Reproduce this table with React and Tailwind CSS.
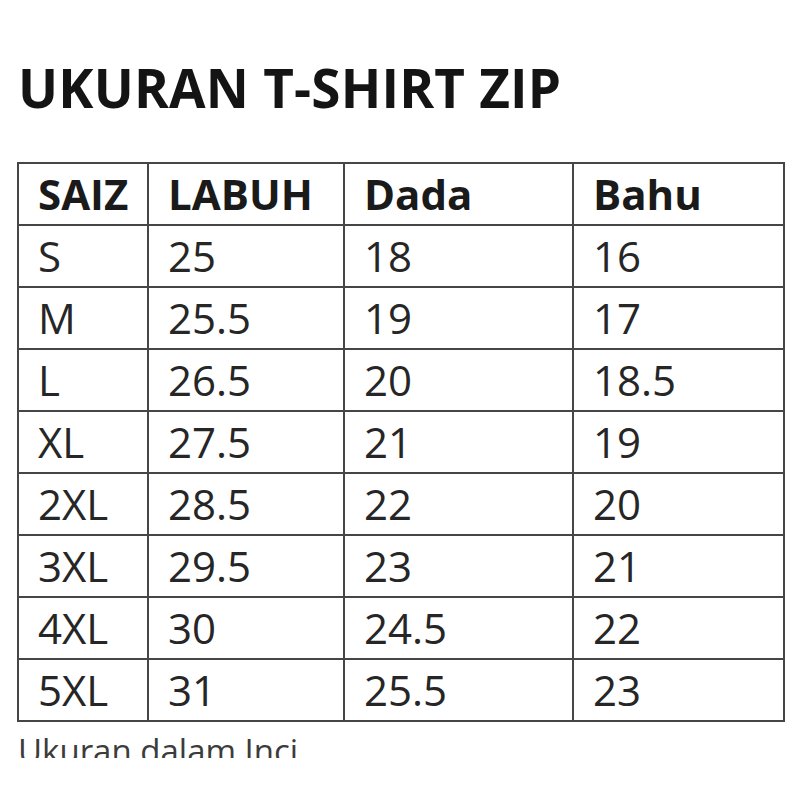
const rows = [
  ['S', '25', '18', '16'],
  ['M', '25.5', '19', '17'],
  ['L', '26.5', '20', '18.5'],
  ['XL', '27.5', '21', '19'],
  ['2XL', '28.5', '22', '20'],
  ['3XL', '29.5', '23', '21'],
  ['4XL', '30', '24.5', '22'],
  ['5XL', '31', '25.5', '23'],
];

const headers = ['SAIZ', 'LABUH', 'Dada', 'Bahu'];
const widths = ['w-[130px]', 'w-[196px]', 'w-[229px]', 'w-[211px]'];

export default function App() {
  return (
    <div
      className="w-[800px] h-[800px] bg-white overflow-hidden pl-[18px] pt-[61px]"
      style={{ fontFamily: '"Open Sans", sans-serif' }}
    >
      <h1 className="text-[53px] leading-none font-bold text-[#141414] tracking-[0.2px]">
        UKURAN T-SHIRT ZIP
      </h1>

      <table className="mt-[48px] -ml-[1px] border-collapse border-2 border-[#464646] table-fixed">
        <thead>
          <tr className="h-[62px]">
            {headers.map((h, i) => (
              <th
                key={h}
                className={`${widths[i]} border-2 border-[#464646] text-left align-middle pl-[19px] text-[42px] leading-none font-bold text-[#1a1a1a]`}
              >
                {h}
              </th>
            ))}
          </tr>
        </thead>
        <tbody>
          {rows.map((r) => (
            <tr key={r[0]} className="h-[62px]">
              {r.map((c, i) => (
                <td
                  key={i}
                  className="border-2 border-[#464646] align-middle pl-[19px] text-[42px] leading-none text-[#262626]"
                >
                  {c}
                </td>
              ))}
            </tr>
          ))}
        </tbody>
      </table>

      <div className="h-[24px] overflow-hidden mt-[12px]">
        <p className="text-[33px] leading-none text-[#3c3c3c]">Ukuran dalam Inci</p>
      </div>
    </div>
  );
}
